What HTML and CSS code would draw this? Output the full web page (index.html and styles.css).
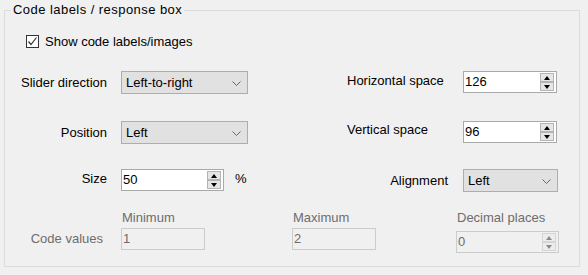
FILE: index.html
```html
<!DOCTYPE html>
<html lang="en">
<head>
  <meta charset="UTF-8">
  <title>Code labels / response box</title>
  <link rel="stylesheet" href="styles.css">
</head>
<body>

<fieldset class="group">
  <legend>Code labels / response box</legend>

  <label class="check-row">
    <span class="check">
      <svg width="11" height="11" viewBox="0 0 11 11"><polyline points="1.5,5.5 4,8.5 9.5,1.5" fill="none" stroke="#333" stroke-width="1.2"/></svg>
    </span>
    Show code labels/images
  </label>

  <div class="fields">
    <span class="lbl">Slider direction</span>
    <div class="select">Left-to-right<svg class="chev" width="9" height="5" viewBox="0 0 9 5"><polyline points="0.5,0.5 4.5,4.5 8.5,0.5" fill="none" stroke="#666" stroke-width="1"/></svg></div>
    <span class="lbl-r lift">Horizontal space</span>
    <div class="num">126<span class="spin"><span class="up"></span><span class="down"></span></span></div>

    <span class="lbl">Position</span>
    <div class="select">Left<svg class="chev" width="9" height="5" viewBox="0 0 9 5"><polyline points="0.5,0.5 4.5,4.5 8.5,0.5" fill="none" stroke="#666" stroke-width="1"/></svg></div>
    <span class="lbl-r lift-more">Vertical space</span>
    <div class="num">96<span class="spin"><span class="up"></span><span class="down"></span></span></div>

    <span class="lbl lift">Size</span>
    <div class="size-cell">
      <div class="num size">50<span class="spin"><span class="up"></span><span class="down"></span></span></div>
      <span class="unit lift">%</span>
    </div>
    <span class="lbl-r align-lbl">Alignment</span>
    <div class="select wide">Left<svg class="chev" width="9" height="5" viewBox="0 0 9 5"><polyline points="0.5,0.5 4.5,4.5 8.5,0.5" fill="none" stroke="#666" stroke-width="1"/></svg></div>
  </div>

  <div class="codes">
    <span></span>
    <span class="head">Minimum</span>
    <span class="head">Maximum</span>
    <span class="head">Decimal places</span>

    <span class="code-lbl">Code values</span>
    <div class="num off short">1</div>
    <div class="num off short">2</div>
    <div class="num off decimals">0<span class="spin"><span class="up"></span><span class="down"></span></span></div>
  </div>
</fieldset>

</body>
</html>
```

FILE: styles.css
```css
body {
  margin: 0;
  padding: 2px 0 0 0;
  background-color: #f0f0f0;
  font-family: "Liberation Sans", Arial, sans-serif;
  font-size: 13px;
  color: #000;
}
.group {
  box-sizing: border-box;
  width: 576px;
  margin: 0 0 0 4px;
  padding: 0 0 13px 0;
  border: 1px solid #dcdcdc;
  min-width: 0;
}
.group legend {
  margin-left: 6px;
  padding: 0 2px;
  line-height: 16px;
  letter-spacing: 0.45px;
}
.check-row {
  display: flex;
  align-items: center;
  height: 16px;
  margin: 15px 0 0 21px;
  gap: 6px;
}
.check {
  box-sizing: border-box;
  width: 13px;
  height: 13px;
  border: 1px solid #333;
  background: #fff;
  display: flex;
  align-items: center;
  justify-content: center;
}
.fields {
  display: grid;
  grid-template-columns: 102px 127px 187px 95px;
  grid-template-rows: 50px 48px 23px;
  column-gap: 14px;
  margin-top: 22px;
}
.lbl {
  text-align: right;
  line-height: 23px;
  height: 23px;
}
.lbl-r {
  padding-left: 85px;
  line-height: 23px;
  height: 23px;
}
.lift {
  position: relative;
  top: -2px;
}
.lift-more {
  position: relative;
  top: -3px;
}
.align-lbl {
  padding-left: 0;
  justify-self: end;
  margin-right: 1px;
}
.select {
  box-sizing: border-box;
  height: 23px;
  border: 1px solid #adadad;
  background-color: #e1e1e1;
  padding-left: 4px;
  line-height: 21px;
  display: flex;
  justify-content: space-between;
  align-items: center;
}
.select .chev {
  margin-right: 6px;
  margin-top: 2px;
}
.num {
  box-sizing: border-box;
  height: 22px;
  width: 94px;
  border: 1px solid #a9a9a9;
  background-color: #fff;
  padding-left: 1px;
  line-height: 20px;
  display: flex;
  justify-content: space-between;
}
.spin {
  display: flex;
  flex-direction: column;
  margin: 1px 2px 1px 0;
  width: 14px;
}
.spin span {
  box-sizing: border-box;
  flex: 1;
  border: 1px solid #b4b4b4;
  background-color: #e6e6e6;
  position: relative;
}
.spin span + span {
  margin-top: 0;
}
.spin .up::after, .spin .down::after {
  content: "";
  position: absolute;
  left: 3px;
  border-left: 3.5px solid transparent;
  border-right: 3.5px solid transparent;
}
.spin .up::after {
  top: 2px;
  border-bottom: 4px solid #000;
}
.spin .down::after {
  top: 2px;
  border-top: 4px solid #000;
}
.size-cell {
  display: flex;
  align-items: center;
  gap: 11px;
  height: 22px;
}
.num.size {
  width: 103px;
}
.select.wide {
  width: 95px;
}
.codes {
  display: grid;
  grid-template-columns: 116px 171px 164px 103px;
  grid-template-rows: 16px auto;
  row-gap: 2px;
  margin-top: 18px;
  color: #6d6d6d;
}
.head {
  line-height: 16px;
  padding-left: 1px;
}
.code-lbl {
  text-align: right;
  padding-right: 18px;
  line-height: 22px;
}
.num.off {
  border-color: #cccccc;
  background-color: #f0f0f0;
  color: #6d6d6d;
}
.num.short {
  width: 84px;
}
.num.decimals {
  width: 103px;
  margin-top: 3px;
}
.num.off .spin span {
  border-color: #d5d5d5;
  background-color: #ececec;
}
.num.off .spin .up::after {
  border-bottom-color: #8a8a8a;
}
.num.off .spin .down::after {
  border-top-color: #8a8a8a;
}
```
